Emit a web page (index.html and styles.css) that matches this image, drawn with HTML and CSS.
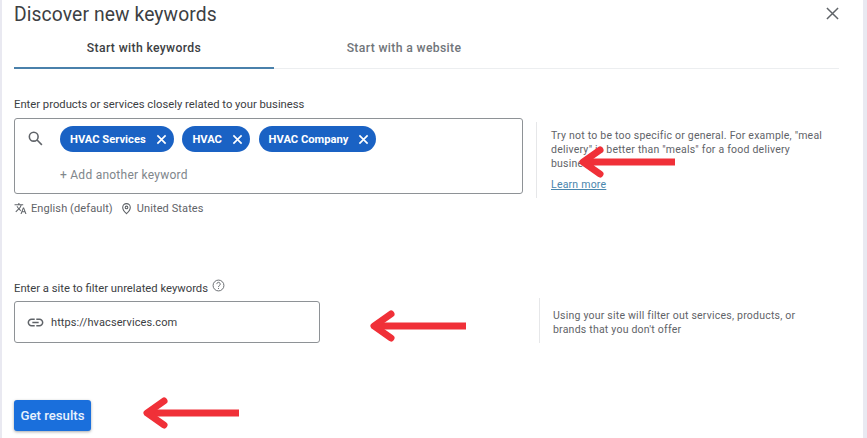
FILE: index.html
```html
<!DOCTYPE html>
<html lang="en">
<head>
<meta charset="utf-8">
<title>Discover new keywords</title>
<link rel="stylesheet" href="styles.css">
</head>
<body>
<div class="page">
  <main class="dialog">
    <header class="head">
      <h1 class="title">Discover new keywords</h1>
      <svg class="close" viewBox="0 0 14 14"><path d="M1 1l12 12M13 1L1 13"/></svg>
    </header>
    <nav class="tabs">
      <div class="tab active">Start with keywords</div>
      <div class="tab">Start with a website</div>
    </nav>
    <p class="label first">Enter products or services closely related to your business</p>
    <section class="row">
      <div class="main-col">
        <div class="box kw-box">
          <svg class="search" viewBox="0 0 24 24"><circle cx="9.5" cy="9.5" r="6.2"/><path d="M14.2 14.2L21 21"/></svg>
          <div class="kw-content">
            <div class="chips">
              <span class="chip">HVAC Services<svg viewBox="0 0 12 12"><path d="M1.5 1.5l9 9M10.5 1.5l-9 9"/></svg></span>
              <span class="chip">HVAC<svg viewBox="0 0 12 12"><path d="M1.5 1.5l9 9M10.5 1.5l-9 9"/></svg></span>
              <span class="chip">HVAC Company<svg viewBox="0 0 12 12"><path d="M1.5 1.5l9 9M10.5 1.5l-9 9"/></svg></span>
            </div>
            <div class="add">+ Add another keyword</div>
          </div>
        </div>
        <div class="locale">
          <svg class="lang" viewBox="0 0 24 24"><path d="M12.87 15.07l-2.54-2.51.03-.03A17.52 17.52 0 0 0 14.07 6H17V4h-7V2H8v2H1v2h11.17C11.5 7.92 10.44 9.75 9 11.35 8.07 10.32 7.3 9.19 6.69 8h-2c.73 1.63 1.73 3.17 2.98 4.56l-5.09 5.02L4 19l5-5 3.11 3.11.76-2.04zM18.5 10h-2L12 22h2l1.12-3h4.75L21 22h2l-4.5-12zm-2.62 7l1.62-4.33L19.12 17h-3.24z"/></svg>
          <span>English (default)</span>
          <svg class="pin" viewBox="0 0 24 24"><path d="M12 3a7 7 0 0 0-7 7c0 5 7 11.5 7 11.5S19 15 19 10a7 7 0 0 0-7-7z"/><circle cx="12" cy="10" r="2.4"/></svg>
          <span>United States</span>
        </div>
      </div>
      <aside class="note note-kw">
        <p>Try not to be too specific or general. For example, "meal delivery" is better than "meals" for a food delivery business</p>
        <a class="learn" href="#">Learn more</a>
      </aside>
    </section>
    <p class="label second">Enter a site to filter unrelated keywords
      <svg class="help" viewBox="0 0 24 24"><circle cx="12" cy="12" r="10"/><path d="M8.800 9.400a3.200 3.200 0 1 1 4.900 2.700c-1.100.7-1.700 1.300-1.700 2.700"/><path d="M12 16.600v1.800"/></svg>
    </p>
    <section class="row site-row">
      <div class="box site-box">
        <svg class="link" viewBox="0 0 24 24"><path d="M3.9 12c0-1.71 1.39-3.1 3.1-3.1h4V7H7c-2.76 0-5 2.24-5 5s2.24 5 5 5h4v-1.9H7c-1.71 0-3.1-1.39-3.1-3.1zM8 13h8v-2H8v2zm9-6h-4v1.9h4c1.71 0 3.1 1.39 3.1 3.1s-1.39 3.1-3.1 3.1h-4V17h4c2.76 0 5-2.24 5-5s-2.24-5-5-5z"/></svg>
        <span>https://hvacservices.com</span>
      </div>
      <aside class="note note-site">
        <p>Using your site will filter out services, products, or brands that you don't offer</p>
      </aside>
    </section>
    <button class="submit" type="button">Get results</button>
  </main>
  <svg class="arrow arrow-a" viewBox="0 0 100 32"><path class="shaft" d="M98 16H8"/><path d="M23 4L6 16 23 28"/></svg>
  <svg class="arrow arrow-b" viewBox="0 0 100 32"><path class="shaft" d="M98 16H8"/><path d="M23 4L6 16 23 28"/></svg>
  <svg class="arrow arrow-c" viewBox="0 0 100 32"><path class="shaft" d="M98 16H8"/><path d="M23 4L6 16 23 28"/></svg>
</div>
</body>
</html>
```
FILE: styles.css
```css
* { box-sizing: border-box; }
html, body { margin: 0; padding: 0; }
body { font-family: Roboto, "Liberation Sans", sans-serif; color: #3c4043; }
.page { position: relative; width: 867px; height: 438px; overflow: hidden; background: #e9e9f1; padding: 0 4px 0 2px; }
.dialog { height: 438px; background: #fff; padding: 0 24px 0 12px; }
.head { display: flex; justify-content: space-between; height: 31px; padding-top: 3px; }
.title { margin: 0; font-size: 19.300px; font-weight: 400; line-height: 24px; letter-spacing: 0.1px; color: #3c4043; }
.close { width: 13px; height: 13px; margin: 4px 0 0 0; fill: none; stroke: #5f6368; stroke-width: 1.600; }
.tabs { display: flex; height: 38px; border-bottom: 1px solid #eceef0; }
.tab { width: 260px; padding-top: 9px; text-align: center; font-size: 12.200px; font-weight: 500; letter-spacing: 0.35px; line-height: 16px; color: #70757a; }
.tab.active { color: #3c4043; height: 38px; border-bottom: 2px solid #4a81ab; }
.label { margin: 0; font-size: 11.250px; line-height: 14px; color: #3c4043; }
.label.first { margin-top: 29px; }
.label.second { margin-top: 67px; display: flex; align-items: flex-start; gap: 4px; }
.row { display: flex; margin-top: 6px; }
.main-col { width: 509px; }
.box { background: #fff; border: 1px solid #8e9296; border-radius: 3px; }
.kw-box { display: flex; height: 76px; padding: 7px 0 0 12px; }
.search { width: 17px; height: 17px; margin-top: 4px; fill: none; stroke: #5f6368; stroke-width: 2.200; flex: none; }
.kw-content { margin-left: 16px; }
.chips { display: flex; gap: 8.700px; }
.chip { display: flex; align-items: center; height: 26px; padding: 0 7px 0 10px; border-radius: 13px; background: #1a62c4; color: #fff; font-size: 11.200px; font-weight: 700; white-space: nowrap; }
.chip svg { width: 11px; height: 11px; margin-left: 10px; fill: none; stroke: #fff; stroke-width: 1.800; }
.add { margin: 15px 0 0 0; font-size: 12px; line-height: 16px; letter-spacing: 0.25px; color: #80868b; }
.locale { display: flex; align-items: center; height: 14px; margin-top: 7px; font-size: 11px; letter-spacing: 0.1px; color: #5f6368; }
.lang { width: 13px; height: 13px; margin-right: 4px; fill: #5f6368; }
.pin { width: 13px; height: 13px; margin: 0 4px 0 7px; fill: none; stroke: #5f6368; stroke-width: 2; }
.note { border-left: 1px solid #e6e7e9; font-size: 10.500px; line-height: 14px; letter-spacing: 0.22px; color: #5f6368; }
.note p { margin: 0; }
.note-kw { width: 300px; height: 76px; margin: 4px 0 0 13px; padding: 7px 0 0 14px; }
.learn { display: block; margin-top: 7px; color: #4a86ad; text-decoration: underline; }
.note-site { width: 285px; height: 45px; margin: -3px 0 0 219px; padding: 11px 0 0 13px; }
.help { width: 13px; height: 13px; margin-top: -3px; fill: none; stroke: #5f6368; stroke-width: 1.700; }
.site-row { margin-top: 5px; }
.site-box { display: flex; align-items: center; width: 306px; height: 42px; padding-left: 11px; font-size: 11px; letter-spacing: 0.1px; color: #3c4043; }
.link { width: 19px; height: 19px; margin-right: 6px; fill: #5f6368; flex: none; }
.submit { display: block; width: 77px; height: 31px; margin-top: 57px; padding: 0; border: 0; border-radius: 3px; background: #1a6fdc; color: #e8f1fd; font-family: inherit; font-size: 13.200px; font-weight: 500; box-shadow: 0 1px 3px rgba(60,64,67,.45); }
.arrow { position: absolute; width: 100px; height: 32px; fill: none; stroke: #f03038; stroke-width: 7; stroke-linecap: round; stroke-linejoin: round; }
.arrow .shaft { stroke-linecap: butt; }
.arrow-a { left: 577px; top: 146px; }
.arrow-b { left: 368px; top: 310px; }
.arrow-c { left: 141px; top: 397px; }
```
